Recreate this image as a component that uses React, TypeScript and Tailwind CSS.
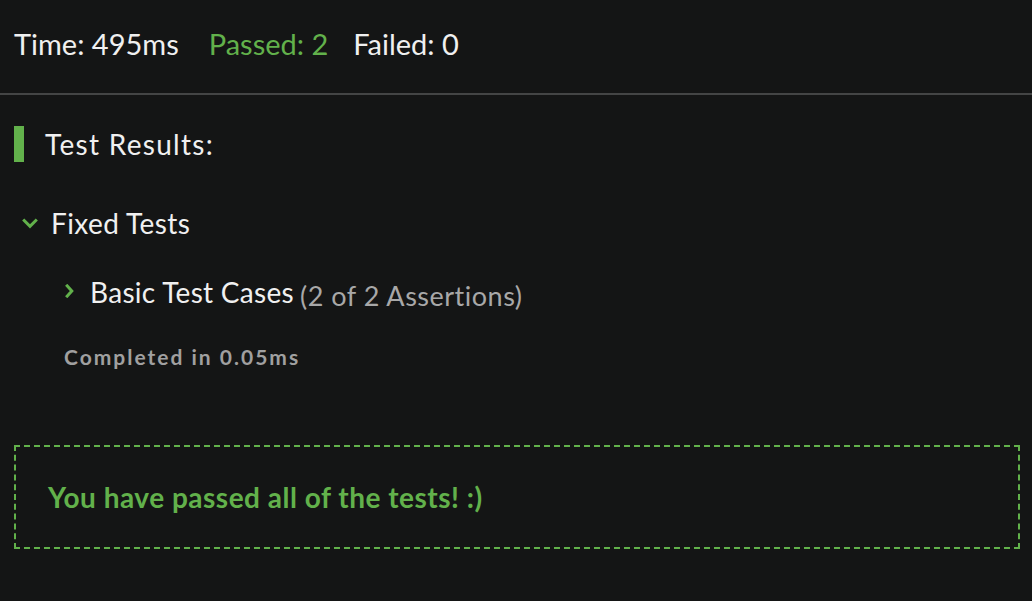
const ChevronDown = () => (
  <svg width="16" height="11" viewBox="0 0 16 11" fill="none">
    <path d="M1.2 1.5l6.8 6.8 6.8-6.8" stroke="#62b14b" strokeWidth="3" />
  </svg>
)

const ChevronRight = () => (
  <svg width="9" height="14" viewBox="0 0 9 14" fill="none">
    <path d="M1.2 0.8l5.6 6.2-5.6 6.2" stroke="#62b14b" strokeWidth="3" />
  </svg>
)

export default function App() {
  return (
    <div
      className="w-[1032px] h-[601px] bg-[#141515] text-[#f0f0f0] overflow-hidden"
      style={{ fontFamily: 'Lato, "Noto Sans", sans-serif' }}
    >
      <div className="h-[95px] flex items-center px-[14px] pb-[5px] text-[29px] border-b-2 border-[#444545]">
        <span>Time: 495ms</span>
        <span className="ml-[30px] text-[#62b14b]">Passed: 2</span>
        <span className="ml-[25px]">Failed: 0</span>
      </div>

      <div className="flex items-center mt-[31px] px-[14px] h-[36px]">
        <div className="w-[10px] h-[36px] bg-[#62b14b]" />
        <span className="ml-[21px] text-[28px] tracking-[1.3px]">Test Results:</span>
      </div>

      <div className="flex items-center mt-[41px] pl-[22px] h-[40px]">
        <ChevronDown />
        <span className="ml-[13px] text-[28px] tracking-[0.4px]">Fixed Tests</span>
      </div>

      <div className="flex items-baseline mt-[28px] pl-[65px] h-[40px]">
        <span className="self-center"><ChevronRight /></span>
        <span className="ml-[16px] text-[28px] tracking-[0.3px]">Basic Test Cases</span>
        <span className="ml-[6px] text-[27px] tracking-[0.5px] text-[#a8a8a8] relative top-[3px]">(2 of 2 Assertions)</span>
      </div>

      <div className="mt-[30px] pl-[64px] text-[21px] font-bold tracking-[2px] text-[#a0a0a0]">
        Completed in 0.05ms
      </div>

      <div className="ml-[14px] mr-[12px] mt-[72px] h-[104px] border-2 border-dashed border-[#62b14b] flex items-center pl-[32px]">
        <span className="text-[28px] font-bold text-[#62b14b] tracking-[0.5px]">You have passed all of the tests! :)</span>
      </div>
    </div>
  )
}
